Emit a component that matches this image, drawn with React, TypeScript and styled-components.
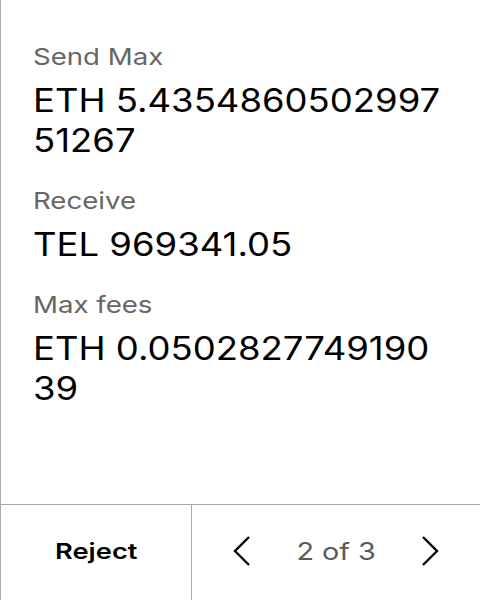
import React from "react";
import styled, { createGlobalStyle } from "styled-components";

const Global = createGlobalStyle`
  html, body { margin: 0; padding: 0; background: #fff; }
  body { font-family: Inter, "Noto Sans", sans-serif; -webkit-font-smoothing: antialiased; }
`;

const Screen = styled.div`
  width: 480px;
  height: 600px;
  box-sizing: border-box;
  border-left: 1px solid #a8a8a8;
  display: flex;
  flex-direction: column;
`;

const Content = styled.div`
  flex: 1;
  padding: 43px 0 0 32px;
  display: flex;
  flex-direction: column;
  gap: 26px;
`;

const Section = styled.div`
  display: flex;
  flex-direction: column;
  align-items: flex-start;
  gap: 10px;
`;

const Label = styled.div`
  font-size: 23px;
  line-height: 28px;
  color: #666;
  transform: scaleX(1.2);
  transform-origin: left center;
`;

const Value = styled.div`
  width: 366px;
  font-size: 32px;
  line-height: 40px;
  color: #000;
  word-break: break-all;
  transform: scaleX(1.14);
  transform-origin: left center;
`;

const Footer = styled.div`
  height: 95px;
  border-top: 1px solid #a8a8a8;
  display: grid;
  grid-template-columns: 191px 1fr;
`;

const RejectButton = styled.div`
  border-right: 1px solid #a8a8a8;
  display: flex;
  align-items: center;
  justify-content: center;
  padding-bottom: 3px;
  font-size: 22px;
  font-weight: 600;
  color: #000;
`;

const Stretched = styled.span<{ $k: number }>`
  display: inline-block;
  transform: scaleX(${(p) => p.$k});
`;

const Pager = styled.div`
  display: flex;
  align-items: center;
  justify-content: space-between;
  padding: 0 40px 3px 40px;
`;

const PageText = styled.div`
  font-size: 24px;
  color: #5a5a5a;
`;

const Chevron = styled.svg`
  width: 20px;
  height: 32px;
`;

export default function App() {
  return (
    <>
      <Global />
      <Screen>
        <Content>
          <Section>
            <Label>Send Max</Label>
            <Value>ETH 5.435486050299751267</Value>
          </Section>
          <Section>
            <Label>Receive</Label>
            <Value>TEL 969341.05</Value>
          </Section>
          <Section>
            <Label>Max fees</Label>
            <Value>ETH 0.050282774919039</Value>
          </Section>
        </Content>
        <Footer>
          <RejectButton>
            <Stretched $k={1.24}>Reject</Stretched>
          </RejectButton>
          <Pager>
            <Chevron viewBox="0 0 20 32">
              <path d="M17 2 L3 16 L17 30" fill="none" stroke="#000" strokeWidth="2.4" />
            </Chevron>
            <PageText>
              <Stretched $k={1.2}>2 of 3</Stretched>
            </PageText>
            <Chevron viewBox="0 0 20 32">
              <path d="M3 2 L17 16 L3 30" fill="none" stroke="#000" strokeWidth="2.4" />
            </Chevron>
          </Pager>
        </Footer>
      </Screen>
    </>
  );
}
